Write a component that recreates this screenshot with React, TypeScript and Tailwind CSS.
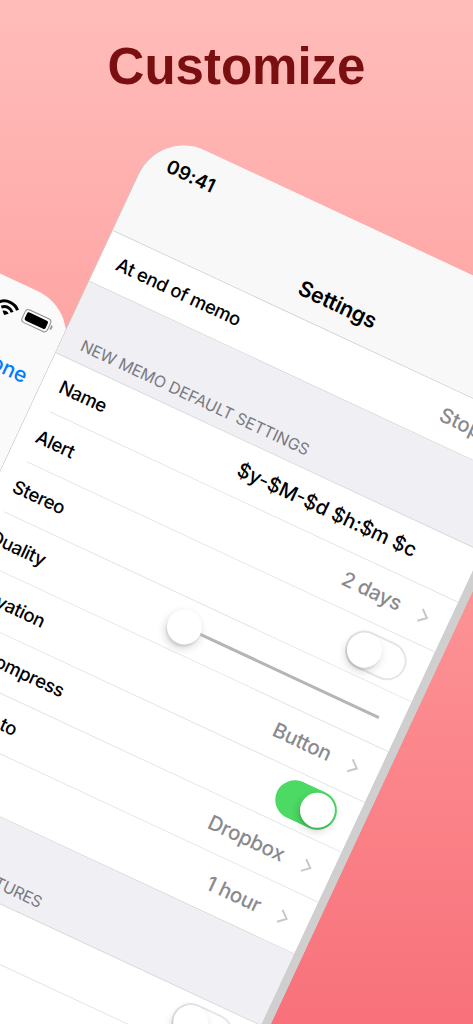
import React from 'react';

// Right chevron used on the disclosure rows
function Chevron() {
  return (
    <svg width="10" height="16" viewBox="0 0 10 16" fill="none" className="shrink-0">
      <polyline points="1,1.5 8.5,8 1,14.5" stroke="#c7c7cc" strokeWidth="2" />
    </svg>
  );
}

function Switch({ on }: { on?: boolean }) {
  if (on) {
    return (
      <div className="w-[64px] h-[39px] rounded-full bg-[#4cd964] flex items-center justify-end px-[2px] shrink-0">
        <div className="w-[35px] h-[35px] rounded-full bg-white shadow-[0_4px_8px_rgba(0,0,0,0.16),0_3px_1px_rgba(0,0,0,0.06)]" />
      </div>
    );
  }
  return (
    <div className="w-[64px] h-[39px] rounded-full bg-white border-2 border-[#e5e5ea] flex items-center shrink-0">
      <div className="w-[35px] h-[35px] rounded-full bg-white shadow-[0_4px_8px_rgba(0,0,0,0.16),0_3px_1px_rgba(0,0,0,0.06)]" />
    </div>
  );
}

function Row({ label, children, last }: { label: string; children?: React.ReactNode; last?: boolean }) {
  return (
    <div className={last ? 'bg-white border-b border-[#d9d9dc] pl-5' : 'bg-white pl-5'}>
      <div className={last ? 'h-[55.3px] flex items-center justify-between pr-5' : 'h-[55.3px] flex items-center justify-between pr-5 border-b border-[#e3e3e6]'}>
        <span className="-ml-[2px] text-[18.5px] font-medium tracking-[-0.02em] text-black whitespace-nowrap">{label}</span>
        {children}
      </div>
    </div>
  );
}

function Disclosure({ value }: { value: string }) {
  return (
    <div className="flex items-center gap-[21px]">
      <span className="text-[20.5px] font-medium tracking-[-0.01em] text-[#8a8a8e]">{value}</span>
      <Chevron />
    </div>
  );
}

function SectionHeader({ title, tight }: { title: string; tight?: boolean }) {
  return (
    <div className="h-[79px] bg-[#efeff4] border-b border-[#d9d9dc] flex items-end px-5 pb-[6px]">
      <span className={tight ? 'text-[16px] tracking-[-0.02em] text-[#7a7a80] uppercase whitespace-nowrap' : 'text-[16px] text-[#7a7a80] uppercase whitespace-nowrap'}>{title}</span>
    </div>
  );
}

function BackPhone() {
  return (
    <div className="absolute left-[-344px] top-[113px] w-[471px] h-[500px] origin-top-left rotate-[25deg] rounded-tr-[50px] bg-[#fafafa]">
      <div className="h-[55px] flex items-center justify-end gap-[5px] pr-[21px]">
        <svg width="24" height="18" viewBox="0 0 24 18" fill="none" className="shrink-0">
          <path d="M2 7 C7 1.5 17 1.5 22 7" stroke="#000" strokeWidth="3" />
          <path d="M6 11 C9.5 7.5 14.5 7.5 18 11" stroke="#000" strokeWidth="3" />
          <path d="M12 17 L8.6 13.8 C10.5 12.2 13.5 12.2 15.4 13.8 Z" fill="#000" />
        </svg>
        <div className="flex items-center gap-[1px]">
          <div className="w-[29px] h-[15px] rounded-[4px] border border-[#8e8e8e] p-[2px]">
            <div className="w-full h-full rounded-[2px] bg-black" />
          </div>
          <div className="w-[2px] h-[5px] rounded-r bg-[#9a9a9a]" />
        </div>
      </div>
      <div className="h-[55px] flex items-center justify-end pr-[24px]">
        <span className="text-[21px] font-medium text-[#007aff]">Done</span>
      </div>
    </div>
  );
}

function SettingsPhone() {
  return (
    <div className="absolute left-[159px] top-[129px] w-[480px] h-[1000px] origin-top-left rotate-[25deg] rounded-t-[50px] border-l border-r-[9px] border-l-[#c9c9c9] border-r-[#cfcfcf] overflow-hidden bg-white">
      {/* Status and nav bar */}
      <div className="h-[112px] bg-[#f8f8f8] border-b border-[#d4d4d6]">
        <div className="h-[56px] flex items-center pl-[22px] pt-[5px]">
          <span className="text-[19px] font-semibold tracking-[0.01em] text-black">09:41</span>
        </div>
        <div className="h-[55px] flex items-center justify-center">
          <span className="text-[21.5px] font-semibold tracking-[-0.01em] text-black">Settings</span>
        </div>
      </div>

      <Row label="At end of memo" last>
        <Disclosure value="Stop" />
      </Row>

      <SectionHeader title="New memo default settings" />
      <Row label="Name">
        <span className="text-[20px] font-medium text-black mr-[40px]">$y-$M-$d $h:$m $c</span>
      </Row>
      <Row label="Alert">
        <Disclosure value="2 days" />
      </Row>
      <Row label="Stereo">
        <Switch />
      </Row>
      <Row label="Quality">
        <div className="w-[232px] flex items-center mr-[3px]">
          <div className="w-[35px] h-[35px] shrink-0 rounded-full bg-white shadow-[0_4px_8px_rgba(0,0,0,0.18),0_3px_1px_rgba(0,0,0,0.06)]" />
          <div className="flex-1 h-[3px] bg-[#b5b5b5]" />
        </div>
      </Row>
      <Row label="Activation">
        <Disclosure value="Button" />
      </Row>
      <Row label="Auto Compress">
        <Switch on />
      </Row>
      <Row label="Auto save to">
        <Disclosure value="Dropbox" />
      </Row>
      <Row label="Keep for" last>
        <Disclosure value="1 hour" />
      </Row>

      <SectionHeader title="Experimental features" tight />
      <Row label="Widget">
        <Switch />
      </Row>
      <Row label="Siri">
        <Disclosure value="On" />
      </Row>
    </div>
  );
}

export default function App() {
  return (
    <div className="relative w-[473px] h-[1024px] overflow-hidden bg-gradient-to-b from-[#ffbdba] to-[#f8717b] font-[Inter,sans-serif]">
      <h1 className="pt-[41px] text-center text-[51px] leading-none font-bold text-[#7a0f12] font-['Liberation_Sans',Arial,sans-serif]">
        Customize
      </h1>
      <BackPhone />
      <SettingsPhone />
    </div>
  );
}
